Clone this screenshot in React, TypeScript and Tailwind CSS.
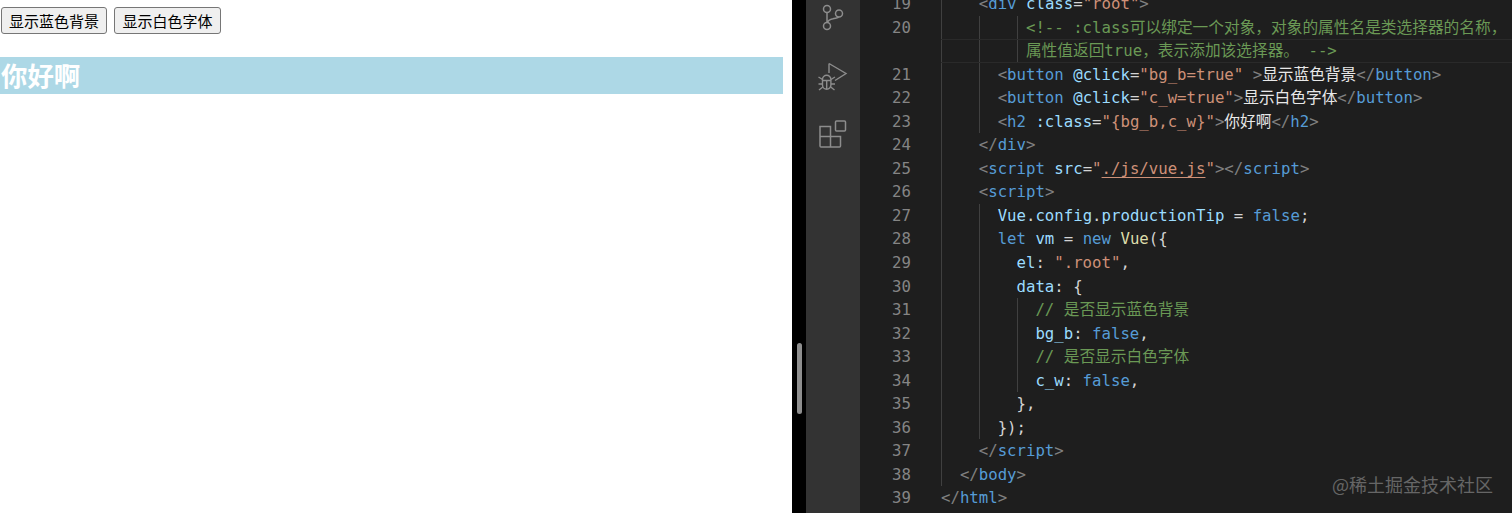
import React from "react";

const c = {
  br: "text-[#808080]",
  tag: "text-[#569cd6]",
  attr: "text-[#9cdcfe]",
  str: "text-[#ce9178]",
  com: "text-[#6a9955]",
  txt: "text-[#d4d4d4]",
  kw: "text-[#569cd6]",
  fn: "text-[#dcdcaa]",
  white: "text-[#e8e8e8]",
  link: "text-[#ce9178] underline decoration-[#ce9178] underline-offset-[3px]",
};

type Tok = [string, string];

interface Line {
  num?: number;
  indent: number;
  guides: number[];
  toks: Tok[];
  active?: boolean;
}

const lines: Line[] = [
  { num: 19, indent: 4, guides: [0], toks: [[c.br, "<"], [c.tag, "div"], [c.attr, " class"], [c.txt, "="], [c.str, "\"root\""], [c.br, ">"]] },
  { num: 20, indent: 9, guides: [0, 4, 8], toks: [[c.com, "<!-- :class可以绑定一个对象，对象的属性名是类选择器的名称，"]] },
  { indent: 9, guides: [0, 4, 8], active: true, toks: [[c.com, "属性值返回true，表示添加该选择器。 -->"]] },
  { num: 21, indent: 6, guides: [0, 4], toks: [[c.br, "<"], [c.tag, "button"], [c.attr, " @click"], [c.txt, "="], [c.str, "\"bg_b=true\""], [c.br, " >"], [c.white, "显示蓝色背景"], [c.br, "</"], [c.tag, "button"], [c.br, ">"]] },
  { num: 22, indent: 6, guides: [0, 4], toks: [[c.br, "<"], [c.tag, "button"], [c.attr, " @click"], [c.txt, "="], [c.str, "\"c_w=true\""], [c.br, ">"], [c.white, "显示白色字体"], [c.br, "</"], [c.tag, "button"], [c.br, ">"]] },
  { num: 23, indent: 6, guides: [0, 4], toks: [[c.br, "<"], [c.tag, "h2"], [c.attr, " :class"], [c.txt, "="], [c.str, "\"{bg_b,c_w}\""], [c.br, ">"], [c.white, "你好啊"], [c.br, "</"], [c.tag, "h2"], [c.br, ">"]] },
  { num: 24, indent: 4, guides: [0], toks: [[c.br, "</"], [c.tag, "div"], [c.br, ">"]] },
  { num: 25, indent: 4, guides: [0], toks: [[c.br, "<"], [c.tag, "script"], [c.attr, " src"], [c.txt, "="], [c.str, "\""], [c.link, "./js/vue.js"], [c.str, "\""], [c.br, "></"], [c.tag, "script"], [c.br, ">"]] },
  { num: 26, indent: 4, guides: [0], toks: [[c.br, "<"], [c.tag, "script"], [c.br, ">"]] },
  { num: 27, indent: 6, guides: [0, 4], toks: [[c.attr, "Vue"], [c.txt, "."], [c.attr, "config"], [c.txt, "."], [c.attr, "productionTip"], [c.txt, " = "], [c.kw, "false"], [c.txt, ";"]] },
  { num: 28, indent: 6, guides: [0, 4], toks: [[c.kw, "let"], [c.attr, " vm"], [c.txt, " = "], [c.kw, "new"], [c.fn, " Vue"], [c.txt, "({"]] },
  { num: 29, indent: 8, guides: [0, 4], toks: [[c.attr, "el"], [c.txt, ": "], [c.str, "\".root\""], [c.txt, ","]] },
  { num: 30, indent: 8, guides: [0, 4], toks: [[c.attr, "data"], [c.txt, ": {"]] },
  { num: 31, indent: 10, guides: [0, 4, 8], toks: [[c.com, "// 是否显示蓝色背景"]] },
  { num: 32, indent: 10, guides: [0, 4, 8], toks: [[c.attr, "bg_b"], [c.txt, ": "], [c.kw, "false"], [c.txt, ","]] },
  { num: 33, indent: 10, guides: [0, 4, 8], toks: [[c.com, "// 是否显示白色字体"]] },
  { num: 34, indent: 10, guides: [0, 4, 8], toks: [[c.attr, "c_w"], [c.txt, ": "], [c.kw, "false"], [c.txt, ","]] },
  { num: 35, indent: 8, guides: [0, 4], toks: [[c.txt, "},"]] },
  { num: 36, indent: 6, guides: [0, 4], toks: [[c.txt, "});"]] },
  { num: 37, indent: 4, guides: [0], toks: [[c.br, "</"], [c.tag, "script"], [c.br, ">"]] },
  { num: 38, indent: 2, guides: [0], toks: [[c.br, "</"], [c.tag, "body"], [c.br, ">"]] },
  { num: 39, indent: 0, guides: [], toks: [[c.br, "</"], [c.tag, "html"], [c.br, ">"]] },
];

function CodeLine({ line }: { line: Line }) {
  const cells = [];
  for (let i = 0; i < line.indent; i++) {
    cells.push(
      <span key={i} className={line.guides.includes(i) ? "w-[1ch] shrink-0 border-l border-[#404040]" : "w-[1ch] shrink-0"} />
    );
  }
  return (
    <div className="flex h-[23.55px] leading-[23.55px]">
      <div className="w-[51px] shrink-0 text-right text-[#858585]">{line.num}</div>
      <div className={line.active ? "flex ml-[30px] flex-1 border-y border-[#2a2a2a] leading-[21.55px]" : "flex ml-[30px] flex-1"}>
        {cells}
        <span className="whitespace-pre">
          {line.toks.map((t, i) => (
            <span key={i} className={t[0]}>{t[1]}</span>
          ))}
        </span>
      </div>
    </div>
  );
}

function GitIcon() {
  return (
    <svg width="22" height="28" viewBox="0 0 22 28" fill="none" stroke="#8d8d8d" strokeWidth="1.5">
      <circle cx="5" cy="6" r="3.5" />
      <circle cx="17" cy="10.500" r="3.500" />
      <circle cx="5" cy="23" r="3.500" />
      <path d="M5 9.500V19.500M5.500 19.500C6 17 8 16.500 11 15.800C14 15 16 15 16.800 14" />
    </svg>
  );
}

function DebugIcon() {
  return (
    <svg width="30" height="30" viewBox="0 0 30 30" fill="none" stroke="#8d8d8d" strokeWidth="1.4">
      <path d="M11 1.500V11M11 1.500L28 11.500L17 18.500" />
      <path d="M4.500 17.500a4.200 4.200 0 0 1 8.400 0v5.500a4.200 4.200 0 0 1-8.400 0z" />
      <path d="M4.500 18.500h8.400M8.700 18.500v8.500M0.500 15l4 2.500M17 15l-4 2.500M0.500 22h4M17 22h-4M1 28l3.800-3M16.500 28l-3.800-3" />
    </svg>
  );
}

function ExtensionsIcon() {
  return (
    <svg width="28" height="28" viewBox="0 0 28 28" fill="none" stroke="#8d8d8d" strokeWidth="1.5">
      <rect x="16.500" y="1" width="10" height="10" rx="1" />
      <path d="M1 6.500h10.500V27H2a1 1 0 0 1-1-1zM1 16.500h20.500V26a1 1 0 0 1-1 1h-9" />
    </svg>
  );
}

export default function App() {
  return (
    <div className="flex h-[513px] w-[1512px] overflow-hidden bg-white">
      <div className="w-[792px] shrink-0 pr-[9px] font-['Noto_Sans_CJK_SC','Liberation_Sans',sans-serif]">
        <div className="flex gap-[7px] pl-px pt-[7px]">
          <button className="h-[27px] w-[106px] rounded-[3px] border border-[#767676] bg-[#efefef] text-[15px] leading-none text-black">显示蓝色背景</button>
          <button className="h-[27px] w-[107px] rounded-[3px] border border-[#767676] bg-[#efefef] text-[15px] leading-none text-black">显示白色字体</button>
        </div>
        <h2 className="mt-[23px] h-[37px] bg-[#add8e6] pl-px text-[26.4px] font-bold leading-[35px] text-white">你好啊</h2>
      </div>
      <div className="relative w-[14px] shrink-0 bg-black">
        <div className="absolute left-[5px] top-[343px] h-[71px] w-[5px] rounded-full bg-[#8f8f8f]" />
      </div>
      <div className="flex w-[54px] shrink-0 flex-col items-center bg-[#333333]">
        <div className="ml-[-1px] mt-[3px]"><GitIcon /></div>
        <div className="ml-[-1px] mt-[31px]"><DebugIcon /></div>
        <div className="mt-[28px]"><ExtensionsIcon /></div>
      </div>
      <div className="relative flex-1 overflow-hidden bg-[#1e1e1e] font-['DejaVu_Sans_Mono','Noto_Sans_CJK_SC',monospace] text-[15.7px]">
        <div className="mt-[-8px]">
          {lines.map((l, i) => (
            <CodeLine key={i} line={l} />
          ))}
        </div>
        <div className="absolute bottom-[17px] right-[19px] font-['Noto_Sans_CJK_SC',sans-serif] text-[18px] leading-[24px] text-[#666666]">@稀土掘金技术社区</div>
      </div>
    </div>
  );
}
